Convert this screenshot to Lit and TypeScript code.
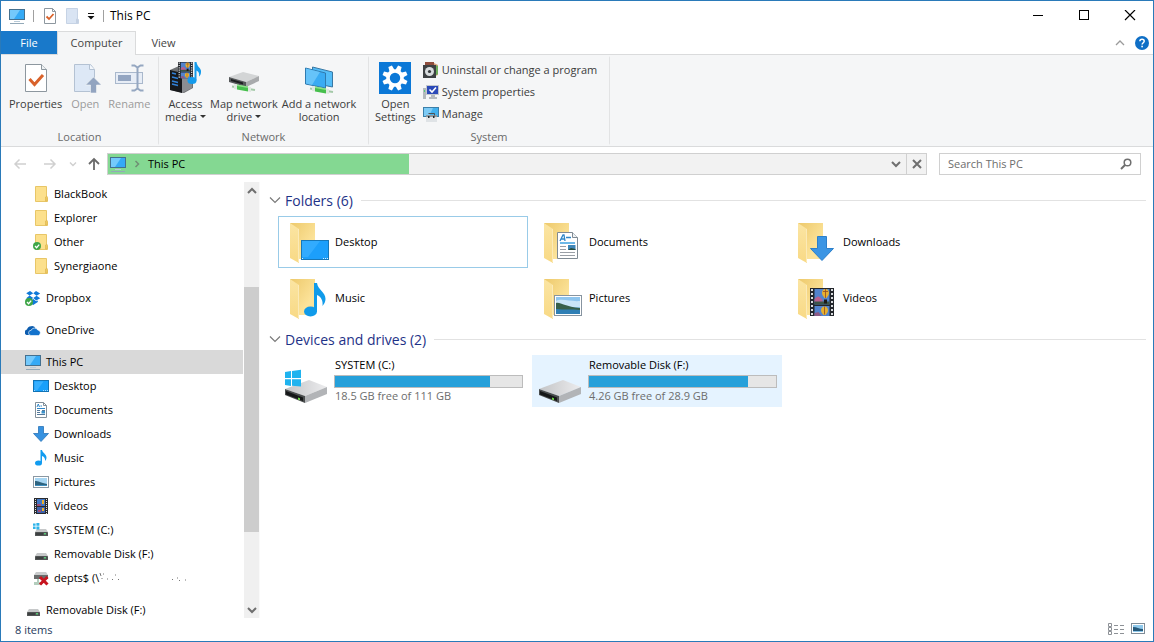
import { LitElement, html, css, svg, nothing } from "lit";
import type { TemplateResult } from "lit";
import { customElement, property, state } from "lit/decorators.js";
import { classMap } from "lit/directives/class-map.js";
import { styleMap } from "lit/directives/style-map.js";

/* ---------- Artwork ---------- */

interface Glyph {
  w: number;
  h: number;
  art: TemplateResult;
}

const monitor: Glyph = {
  w: 16,
  h: 16,
  art: svg`
    <rect x="0.5" y="1.5" width="15" height="10" fill="#35aaf6" stroke="#44708f"/>
    <path d="M1 2h10L5 11H1z" fill="#74c9fb"/>
    <path d="M5 13.5h6" stroke="#b9cbd8"/><path d="M1 15.5h14" stroke="#93a9b8"/>`,
};

const folderSmall: Glyph = {
  w: 16,
  h: 16,
  art: svg`
    <path d="M2.5 0.5h11v10l1 1v4h-12z" fill="#fce08c" stroke="#e8c667"/>
    <path d="M12.5 15V11l1.500-1v5z" fill="#f6d36b" stroke="#dcb450" stroke-width=".7"/>`,
};

const okBadge = svg`
  <circle cx="4" cy="12" r="4" fill="#3fa648"/>
  <path d="M2 12l1.6 1.7L6.2 10.6" fill="none" stroke="#fff" stroke-width="1.3"/>`;

const folderSynced: Glyph = { w: 16, h: 16, art: svg`${folderSmall.art}${okBadge}` };

const dropbox: Glyph = {
  w: 16,
  h: 16,
  art: svg`
    <path d="M5 1l3.3 2.2L4.6 5.6 1.2 3.3zM11 1l4.2 2.4-3.6 2.4-3.3-2.6zM1.2 8.2l3.4-2.6L8.3 8 5 10.2zM11.6 5.8l3.6 2.4-4 2.2L8.3 8zM8.2 9l3 2.3 1.6-.8v1.6L8.2 15 4 12.2l1-.9z" fill="#1079d8"/>
    ${okBadge}`,
};

const onedrive: Glyph = {
  w: 16,
  h: 16,
  art: svg`
    <path d="M1.6 13A2.8 2.8 0 0 1 2 7.6 4.2 4.2 0 0 1 6 4.2a4.4 4.4 0 0 1 4.4 1.4L6 8 4 13z" fill="#0c5cae"/>
    <path d="M6 13.5a2.6 2.6 0 0 1 .2-5.2 3.5 3.5 0 0 1 6.4-.4A2.9 2.9 0 0 1 13.5 13.5z" fill="#1272cc" stroke="#fff" stroke-width=".6"/>`,
};

const desktopSmall: Glyph = {
  w: 16,
  h: 16,
  art: svg`
    <rect x="0.5" y="2.5" width="15" height="11" fill="#18a0fb" stroke="#1173b5"/>
    <path d="M1.5 3.5h9L4 12.5H1.5z" fill="#38b0ff"/>
    <path d="M1 12.5h2M10 12.5h5" stroke="#cfe9fb" stroke-width=".8" stroke-dasharray="1 1"/>`,
};

const pageDoc = svg`
  <path d="M.5.5h15l5 5v21H.5z" fill="#fff" stroke="#7f8a93"/>
  <path d="M15.5.5v5h5" fill="#eef2f5" stroke="#7f8a93"/>
  <path d="M3 9l3-6h1l1 6M4.500 7H7.500M9 5.500h5" fill="none" stroke="#2f86c8" stroke-width="1.300"/>
  <path d="M3 11h15" stroke="#2f9be0" stroke-width="1.400"/>
  <path d="M3 14.500h6M3 17.500h6M3 20.500h15M3 23.500h15" stroke="#9a9fa6"/>
  <rect x="11" y="13" width="7.500" height="5" fill="#3f86b8"/><path d="M11 18l3-2 4.500 1v1z" fill="#274b3a"/>`;

const documentSmall: Glyph = {
  w: 16,
  h: 16,
  art: svg`
    <path d="M2.500.500h8l3 3v12h-11z" fill="#fff" stroke="#83909a"/>
    <path d="M10.500.500v3h3" fill="none" stroke="#83909a"/>
    <path d="M4 5l1.300-3L6.500 5M7.500 4H9M4 6.500h8" fill="none" stroke="#2f86c8"/>
    <path d="M4 8.500h3M4 10.500h3M4 12.500h8M9 8.500h3" stroke="#55799a"/>
    <rect x="8.500" y="9" width="3.500" height="2.500" fill="#3d92ca"/>`,
};

const downloadSmall: Glyph = {
  w: 16,
  h: 16,
  art: svg`<path d="M5.500.500h5v7h5L8 15.500.500 7.500h5z" fill="#3792e0" stroke="#2a73b8" stroke-width=".8"/>`,
};

const noteSmall: Glyph = {
  w: 16,
  h: 16,
  art: svg`
    <ellipse cx="5.500" cy="13" rx="3.500" ry="2.600" fill="#119cf0"/>
    <path d="M7.500 0h1.500c.5 3 4.500 4 4.500 7.500 0 1.500-.6 2.500-1.500 3.500 .3-2.500-.5-4-3-5v7H7.500z" fill="#119cf0"/>`,
};

const pictureSmall: Glyph = {
  w: 16,
  h: 16,
  art: svg`
    <rect x="0.500" y="2.500" width="15" height="11" fill="#fff" stroke="#8a98a3"/>
    <rect x="2" y="4" width="12" height="8" fill="#a7d6f3"/>
    <path d="M2 7c3 0 6 1.500 12 3v2H2z" fill="#2e6480"/><path d="M2 11h12v1H2z" fill="#3d8fc0"/>`,
};

const filmArt = svg`
  <rect width="24" height="28" fill="#23262b"/>
  <path d="M2 1v27M22 1v27" stroke="#d9dcdf" stroke-width="2" stroke-dasharray="2 2"/>
  <rect x="4.500" y="1" width="15" height="15.500" fill="#5283cd"/>
  <path d="M4.500 11c2-2 3-3 5-2l3 3v2h-8z" fill="#b8608f"/><path d="M4.500 13.500h15v3h-15z" fill="#3c5547"/>
  <path d="M15.500 1c2.500 0 3.500 2 3.500 4s-1.500 3.500-2.500 5h-2c-1-1.500-2.500-3-2.500-5s1-4 3.500-4z" fill="#e8b02e"/>
  <path d="M15.500 1v9M13 3.500h5" stroke="#8f4a24" stroke-width=".8"/><path d="M14 11.500h3v4h-3z" fill="#1d1a18"/>
  <rect x="4.500" y="18" width="15" height="10" fill="#5283cd"/>
  <path d="M14.500 18.500c2.500 0 3.500 2 3.500 4s-1.500 3-2.500 4.500h-2c-1-1.500-2.500-2.500-2.500-4.500s1-4 3.500-4z" fill="#e8b02e"/>
  <path d="M14.500 18.500v8" stroke="#8f4a24" stroke-width=".8"/><path d="M4.500 25l4-1 3 4h-7z" fill="#8c5a86"/>`;

const videoSmall: Glyph = {
  w: 16,
  h: 16,
  art: svg`
    <rect x="1" y="0" width="14" height="16" fill="#2a2b2e"/>
    <path d="M2.500 1v15M13.500 1v15" stroke="#dfe2e4" stroke-dasharray="1 1"/>
    <rect x="4" y="1" width="8" height="7" fill="#4176c4"/><rect x="4" y="9" width="8" height="6" fill="#3c62ad"/>
    <path d="M9 2h2v4H9zM9 10h2v3H9z" fill="#eab030"/><path d="M4 6h4v2H4zM5 12h3v2H5z" fill="#a04c72"/>`,
};

const driveSmallArt = svg`
  <path d="M4 7h9l2 3H2z" fill="#c6c8c9"/>
  <rect x="2" y="10" width="13" height="4" rx=".6" fill="#505454"/>
  <path d="M3 12h7" stroke="#2a2d2e"/><rect x="11" y="11" width="2" height="1.500" fill="#58c877"/>`;

const driveSmall: Glyph = { w: 16, h: 16, art: driveSmallArt };

const systemSmall: Glyph = {
  w: 16,
  h: 16,
  art: svg`
    ${driveSmallArt}
    <path d="M0 1.500h2.600v2.300H0zM3.400 1h3v2.800h-3zM0 4.600h2.600v2.300H0zM3.400 4.600h3v2.800h-3z" fill="#2fb4ea"/>`,
};

const netDriveBroken: Glyph = {
  w: 16,
  h: 16,
  art: svg`
    <path d="M3 2h10l2 3H1z" fill="#c9cbcc"/><rect x="1" y="5" width="14" height="4" fill="#686c6c"/>
    <path d="M4 9h2v3H4zM1 12h8v3H1z" fill="#b3cdbd"/>
    <path d="M7 7l7.500 7.500M14.500 7L7 14.500" stroke="#c8141e" stroke-width="3"/>`,
};

const bigFolder = svg`
  <defs>
    <linearGradient id="fb" x1="0" x2="1" y1="0" y2="1"><stop offset="0" stop-color="#edc96b"/><stop offset=".7" stop-color="#fce39a"/></linearGradient>
    <linearGradient id="ff" x1="0" x2="0" y1="0" y2="1"><stop offset="0" stop-color="#fbe5a3"/><stop offset="1" stop-color="#f8d985"/></linearGradient>
  </defs>
  <path d="M7 5h25v36H14z" fill="url(#fb)"/>
  <path d="M7 5l9 6v34l-9-5z" fill="url(#ff)"/><path d="M15.500 11v33" stroke="#fbeab8"/>`;

const folderWith = (overlay: TemplateResult): Glyph => ({
  w: 48,
  h: 48,
  art: svg`${bigFolder}${overlay}`,
});

const folderDesktop = folderWith(svg`
  <rect x="18.500" y="22.500" width="27" height="19" fill="#1c9ffb" stroke="#1777b8"/>
  <path d="M19 23h18L25 39h-6z" fill="#3cb0ff" opacity=".7"/>
  <path d="M19 40.500h2M40 40.500h5" stroke="#d7efff" stroke-dasharray="1 1"/>`);
const folderDocuments = folderWith(svg`<g transform="translate(20 14)">${pageDoc}</g>`);
const folderDownloads = folderWith(svg`
  <path d="M26.500 18.500h9v12h7L31 42.500 19.500 30.500h7z" fill="#3b95e4" stroke="#2c7fca"/>`);
const folderMusic = folderWith(svg`
  <ellipse cx="27.500" cy="37.500" rx="6.500" ry="5" fill="#109bea"/>
  <path d="M31 9h3c1 7 8.500 9 8.500 16 0 3-1.500 5-3 7 .6-5-1-9-5.500-11v17h-3z" fill="#109bea"/>`);
const folderPictures = folderWith(svg`
  <rect x="17.500" y="21.500" width="27" height="20" fill="#fff" stroke="#8794a0"/>
  <rect x="19" y="23" width="24" height="17" fill="#8ec5ee"/>
  <path d="M19 27c6-3 15 1 24 0v6H19z" fill="#c9e5f7"/>
  <path d="M19 29c5-1 9 4 24 5v3H19z" fill="#37604a"/><path d="M19 35c8 1 16 0 24 1v4H19z" fill="#2f7fb5"/>`);
const folderVideos = folderWith(svg`<g transform="translate(19 14)">${filmArt}</g>`);

const driveBody = svg`
  <defs><linearGradient id="dt" x1="0" x2="1"><stop offset="0" stop-color="#c3c4c6"/><stop offset="1" stop-color="#ececee"/></linearGradient></defs>
  <path d="M2 32L26 23l18 7-22 9z" fill="url(#dt)"/>
  <path d="M22 39l22-9v7l-22 9z" fill="#b2b4b7"/>
  <path d="M2 32l20 7v7L2 38z" fill="#4a4d4e"/>
  <path d="M3 34l17 6.500v3.500L3 37.500z" fill="#151718"/><path d="M15 40.500l2 .8v2l-2-.8z" fill="#6fdc46"/>`;
const driveBig: Glyph = { w: 48, h: 48, art: driveBody };
const systemDriveBig: Glyph = {
  w: 48,
  h: 48,
  art: svg`${driveBody}
    <path d="M2 15l6-.9v7H2zM9 14l9-1.200v8.300H9zM2 22.200h6v6.700l-6-.9zM9 22.200h9v7.300L9 28.800z" fill="#1fb3ef"/>`,
};

const propertiesBig: Glyph = {
  w: 32,
  h: 32,
  art: svg`
    <path d="M5.500 2.500h16l5 5v22h-21z" fill="#fff" stroke="#8d979f"/>
    <path d="M21.500 2.500v5h5" fill="#eef1f3" stroke="#8d979f"/>
    <path d="M9.500 17l5 5.500 8.500-9.500" fill="none" stroke="#d9622b" stroke-width="3"/>`,
};
const openBig: Glyph = {
  w: 32,
  h: 32,
  art: svg`
    <path d="M5.500 2.500h16l4 5v22h-20z" fill="#dde8f6" stroke="#b4c2d3"/>
    <path d="M20.500 2.500v5h5" fill="#f3f7fc" stroke="#b4c2d3"/>
    <path d="M24.500 15l8 8h-5v8h-6v-8h-5z" fill="#92a4c0" stroke="#f5f6f7" stroke-width=".6"/>`,
};
const renameBig: Glyph = {
  w: 32,
  h: 32,
  art: svg`
    <rect x="2.500" y="10.500" width="27" height="11" fill="#e7edf6" stroke="#a9b8cc"/>
    <rect x="5" y="13" width="13" height="6" fill="#93a5c1"/>
    <path d="M18.500 3.500h3l3 2 3-2h3M18.500 28.500h3l3-2 3 2h3M24.500 5v22" fill="none" stroke="#95a7c1" stroke-width="2"/>`,
};
const accessBig: Glyph = {
  w: 32,
  h: 32,
  art: svg`
    <path d="M1 8l9-4 14 4v18l-9 5L1 28z" fill="#6d7073"/>
    <path d="M1 8l12 3v20L1 28z" fill="#17191c"/>
    <path d="M13 11l10-4v19l-10 5z" fill="#8b8e92"/>
    <path d="M3 11l4 1M3 15l6 1.500M3 19l6 1.500M3 22l6 1.500" stroke="#3181d8" stroke-width="1.500"/>
    <g transform="translate(9 0) scale(.62 .58)">${filmArt}</g>
    <ellipse cx="23" cy="18.500" rx="4.500" ry="3.500" fill="#149bec"/>
    <path d="M25.500 0h2c.5 5 5 6 4.500 10 0 2-.8 3.500-2 4.500 .5-3.500-.5-5-2.500-6v10h-2z" fill="#149bec"/>`,
};
const cable = svg`
  <path d="M4 24.500l23 3.500" stroke="#a4c9a8" stroke-width="2"/>
  <path d="M9 22.500l11 2v5l-11-2z" fill="#46bf4d"/><path d="M9 22.500l11 2v1.500l-11-2z" fill="#8fe08c"/>
  <path d="M20 24.500l3 .5v5l-3-.5zM6 22l3 .5v5L6 27z" fill="#dfe8e0"/>`;
const mapDriveBig: Glyph = {
  w: 32,
  h: 32,
  art: svg`
    <path d="M1 15l14-5 16 4-13 6z" fill="#d3d5d6"/><path d="M1 15l17 5v5L1 20z" fill="#56595b"/>
    <path d="M3 17l12 3.500v2L3 19z" fill="#1d2021"/><path d="M18 20l13-6v5l-13 6z" fill="#a8aaac"/>
    ${cable}`,
};
const addLocationBig: Glyph = {
  w: 32,
  h: 32,
  art: svg`
    <path d="M9.500 5l20 5v15l-20-4z" fill="#54bdf8" stroke="#3a78a3"/>
    <path d="M2.500 6l20 5v15l-20-4z" fill="#3aabf3" stroke="#2f7bb0"/>
    <path d="M3 6.500L17 10 9 23 3 21.500z" fill="#79cdfb" opacity=".7"/>
    <g transform="translate(3 2)">${cable}</g>`,
};
const settingsBig: Glyph = {
  w: 32,
  h: 32,
  art: svg`
    <rect width="32" height="32" fill="#0b78d7"/>
    ${[22.5, 67.5, 112.5, 157.5, 202.5, 247.5, 292.5, 337.5].map(
      (a) => svg`<path d="M13.300 8.500l.8-5.200h3.800l.8 5.200z" fill="#fff" transform=${`rotate(${a} 16 16)`}/>`,
    )}
    <circle cx="16" cy="16" r="7" fill="none" stroke="#fff" stroke-width="3.600"/>`,
};

const uninstall: Glyph = {
  w: 16,
  h: 16,
  art: svg`
    <path d="M5 1h6l4 2v10l-3 1z" fill="#d9a07a"/><path d="M12 3l3 1v8l-3 2z" fill="#6cae5c"/>
    <path d="M2 0h9v4H2z" fill="#8e4d3c"/>
    <rect x="0" y="3" width="13" height="13" fill="#3d4143"/>
    <circle cx="6.500" cy="9.500" r="4.500" fill="#d8dcde"/><circle cx="6.500" cy="9.500" r="1.600" fill="#35393b"/>`,
};
const sysProps: Glyph = {
  w: 16,
  h: 16,
  art: svg`
    <path d="M0 4h3v11H0z" fill="#b3b9bd"/><path d="M1 6h1v2H1z" fill="#5c7"/>
    <rect x="3.500" y="1.500" width="12" height="9" fill="#2b49b8" stroke="#c3c8ce"/>
    <path d="M6.500 5.500l2.500 2.500L13 3.500" fill="none" stroke="#fff" stroke-width="1.600"/>
    <path d="M8 11h4v2H8zM6 13h8v2H6z" fill="#b5babf"/>`,
};
const manage: Glyph = {
  w: 16,
  h: 16,
  art: svg`
    <rect x=".5" y="1.500" width="15" height="9" fill="#43b1ee" stroke="#3b7fa9"/>
    <path d="M1 2h9L6 10H1z" fill="#7dcbf6"/>
    <path d="M3 9h11v7H3z" fill="#dfe3e6"/><path d="M3 9h11v2H3z" fill="#8f989e"/>
    <path d="M5 10h1.500v2H5zM10 10h1.500v2H10z" fill="#23282b"/><path d="M5.500 7.500h6v2" fill="none" stroke="#4b5257"/>`,
};

const checkPage: Glyph = {
  w: 16,
  h: 16,
  art: svg`
    <path d="M2.500.500h8l3 3v12h-11z" fill="#fff" stroke="#8d979f"/><path d="M10.500.500v3h3" fill="none" stroke="#8d979f"/>
    <path d="M4.500 8.500L7 11l4.500-5" fill="none" stroke="#d9622b" stroke-width="1.800"/>`,
};
const newPage: Glyph = {
  w: 13,
  h: 16,
  art: svg`<path d="M.500.500h11v10l1 1v4H.500z" fill="#d9e4f3" stroke="#c6d3e5"/><path d="M10 15v-4l2-1v5z" fill="#c3d0e2"/>`,
};
const customize: Glyph = {
  w: 8,
  h: 8,
  art: svg`<path d="M1 1.500h6" stroke="#111"/><path d="M.5 4h7L4 7.500z" fill="#111"/>`,
};
const minimize: Glyph = { w: 12, h: 12, art: svg`<path d="M1 5.500h10" stroke="#000"/>` };
const maximize: Glyph = { w: 12, h: 12, art: svg`<rect x="1.500" y=".5" width="9" height="9" fill="none" stroke="#000"/>` };
const close: Glyph = { w: 12, h: 12, art: svg`<path d="M1 0l10 10M11 0L1 10" stroke="#000" stroke-width="1.200"/>` };
const collapse: Glyph = { w: 10, h: 6, art: svg`<path d="M1 5l4-4 4 4" fill="none" stroke="#9b9b9b" stroke-width="1.300"/>` };
const helpDisc: Glyph = {
  w: 14,
  h: 14,
  art: svg`<circle cx="7" cy="7" r="7" fill="#0f6fc6"/>
    <path d="M4.900 5.300c0-2.700 4.300-2.600 4.300-.1 0 1.500-2.100 1.600-2.100 3.300" fill="none" stroke="#fff" stroke-width="1.500"/><rect x="6.300" y="9.700" width="1.600" height="1.600" fill="#fff"/>`,
};
const back: Glyph = { w: 14, h: 12, art: svg`<path d="M13 6H2M6.500 1.500L2 6l4.500 4.500" fill="none" stroke="#d0d0d0" stroke-width="1.500"/>` };
const forward: Glyph = { w: 14, h: 12, art: svg`<path d="M1 6h11M7.500 1.500L12 6l-4.500 4.500" fill="none" stroke="#d0d0d0" stroke-width="1.500"/>` };
const recent: Glyph = { w: 8, h: 6, art: svg`<path d="M1 1.500l3 3 3-3" fill="none" stroke="#cfcfcf" stroke-width="1.400"/>` };
const up: Glyph = { w: 14, h: 14, art: svg`<path d="M7 13V2M2 7l5-5 5 5" fill="none" stroke="#6a6a6a" stroke-width="1.800"/>` };
const crumb: Glyph = { w: 6, h: 8, art: svg`<path d="M1.500 1l3 3-3 3" fill="none" stroke="#6f8f74" stroke-width="1.500"/>` };
const chevronDown: Glyph = { w: 10, h: 8, art: svg`<path d="M1 2l4 4 4-4" fill="none" stroke="#6f6f6f" stroke-width="2"/>` };
const chevronUp: Glyph = { w: 10, h: 8, art: svg`<path d="M1 6l4-4 4 4" fill="none" stroke="#6f6f6f" stroke-width="2"/>` };
const stop: Glyph = { w: 10, h: 10, art: svg`<path d="M1 1l8 8M9 1L1 9" stroke="#6f6f6f" stroke-width="2"/>` };
const lens: Glyph = {
  w: 12,
  h: 12,
  art: svg`<circle cx="7.500" cy="4.500" r="3.300" fill="none" stroke="#6f6f6f" stroke-width="1.500"/><path d="M5 7L1 11" stroke="#6f6f6f" stroke-width="2"/>`,
};
const sectionChevron: Glyph = { w: 12, h: 8, art: svg`<path d="M1 1.500l5 5 5-5" fill="none" stroke="#7a7a7a" stroke-width="1.200"/>` };
const detailsView: Glyph = {
  w: 16,
  h: 12,
  art: svg`<path d="M.5.500h3v3h-3zM.5 4.500h3v3h-3zM.5 8.500h3v3h-3z" fill="#fff" stroke="#8d9196"/>
    <path d="M6 2.500h4M12 2.500h4M6 6.500h4M12 6.500h4M6 10.500h4M12 10.500h4" stroke="#8d9196"/>`,
};
const tilesView: Glyph = {
  w: 14,
  h: 12,
  art: svg`<rect x=".5" y=".5" width="13" height="10" fill="#fff" stroke="#7f8c97"/><rect x="2" y="2" width="10" height="7" fill="#8fc9ec"/><path d="M2 4c4 0 6 2 10 2v2H2z" fill="#26597a"/>`,
};
const erased: Glyph = {
  w: 88,
  h: 12,
  art: svg`<path d="M1 2l1 3M3 7v1M4 3h1M8 8h1M13 8.500h1M16 4h1M19 8.500h1M73 8.500h1M78 7h1M80 9.500h1M86 9h1" stroke="#777"/>`,
};

const draw = (g: Glyph) => html`<svg
  width=${g.w}
  height=${g.h}
  viewBox=${`0 0 ${g.w} ${g.h}`}
  aria-hidden="true"
>${g.art}</svg>`;

const base = css`
  * { box-sizing: border-box; }
  svg { display: block; flex: none; }
  button {
    font: inherit;
    color: inherit;
    background: none;
    border: 0;
    padding: 0;
    margin: 0;
  }
  a { color: inherit; text-decoration: none; }
`;

/* ---------- Ribbon ---------- */

interface Command {
  lines: string[];
  icon: Glyph;
  off?: boolean;
  menu?: boolean;
}

@customElement("explorer-ribbon")
export class ExplorerRibbon extends LitElement {
  static styles = [
    base,
    css`
      :host { display: flex; height: 92px; background: #f5f6f7; border-bottom: 1px solid #dadbdc; color: #3c3c3c; }
      .group { display: flex; flex-direction: column; align-items: center; padding-top: 7px; border-right: 1px solid #e2e3e4; border-image: linear-gradient(#f5f6f7 2%, #e2e3e4 4%, #e2e3e4 96%, #f5f6f7 98%) 1; }
      .location { flex: 0 0 158px; }
      .network { flex: 0 0 210px; }
      .system { flex: 0 0 241px; }
      .row { display: flex; flex: 1; align-items: flex-start; align-self: flex-start; padding-left: 6px; gap: 4px; }
      .location .row { padding-left: 8px; gap: 7px; }
      .system .row { gap: 7px; }
      .big { display: flex; flex-direction: column; align-items: center; line-height: 13px; white-space: nowrap; }
      .big svg { margin-bottom: 3px; }
      .big:disabled { color: #9b9b9b; }
      .line { display: flex; align-items: center; gap: 3px; }
      .arrow { border: 3px solid transparent; border-top-color: #333; border-bottom-width: 0; }
      .list { display: flex; flex-direction: column; gap: 6px; }
      .small { display: flex; align-items: center; gap: 3px; height: 16px; white-space: nowrap; }
      .small span { padding-bottom: 2px; }
      .caption { line-height: 16px; color: #6a6a6a; padding-bottom: 1px; }
    `,
  ];

  private big = (c: Command) => html`<button class="big" type="button" ?disabled=${c.off}>
    ${draw(c.icon)}
    ${c.lines.map(
      (l, i) => html`<span class="line">${l}${c.menu && i === c.lines.length - 1 ? html`<i class="arrow"></i>` : nothing}</span>`,
    )}
  </button>`;

  private small = (icon: Glyph, label: string) => html`<button class="small" type="button">${draw(icon)}<span>${label}</span></button>`;

  render() {
    return html`
      <section class="group location">
        <div class="row">
          ${[
            { lines: ["Properties"], icon: propertiesBig },
            { lines: ["Open"], icon: openBig, off: true },
            { lines: ["Rename"], icon: renameBig, off: true },
          ].map(this.big)}
        </div>
        <div class="caption">Location</div>
      </section>
      <section class="group network">
        <div class="row">
          ${[
            { lines: ["Access", "media"], icon: accessBig, menu: true },
            { lines: ["Map network", "drive"], icon: mapDriveBig, menu: true },
            { lines: ["Add a network", "location"], icon: addLocationBig },
          ].map(this.big)}
        </div>
        <div class="caption">Network</div>
      </section>
      <section class="group system">
        <div class="row">
          ${this.big({ lines: ["Open", "Settings"], icon: settingsBig })}
          <div class="list">
            ${this.small(uninstall, "Uninstall or change a program")}
            ${this.small(sysProps, "System properties")} ${this.small(manage, "Manage")}
          </div>
        </div>
        <div class="caption">System</div>
      </section>
    `;
  }
}

/* ---------- Navigation tree ---------- */

interface Node {
  label: string;
  icon: Glyph;
  child?: boolean;
  current?: boolean;
  tail?: Glyph;
}

const tree: Node[][] = [
  [
    { label: "BlackBook", icon: folderSmall, child: true },
    { label: "Explorer", icon: folderSmall, child: true },
    { label: "Other", icon: folderSynced, child: true },
    { label: "Synergiaone", icon: folderSmall, child: true },
  ],
  [{ label: "Dropbox", icon: dropbox }],
  [{ label: "OneDrive", icon: onedrive }],
  [
    { label: "This PC", icon: monitor, current: true },
    { label: "Desktop", icon: desktopSmall, child: true },
    { label: "Documents", icon: documentSmall, child: true },
    { label: "Downloads", icon: downloadSmall, child: true },
    { label: "Music", icon: noteSmall, child: true },
    { label: "Pictures", icon: pictureSmall, child: true },
    { label: "Videos", icon: videoSmall, child: true },
    { label: "SYSTEM (C:)", icon: systemSmall, child: true },
    { label: "Removable Disk (F:)", icon: driveSmall, child: true },
    { label: "depts$ (\\", icon: netDriveBroken, child: true, tail: erased },
  ],
  [{ label: "Removable Disk (F:)", icon: driveSmall }],
];

@customElement("explorer-tree")
export class ExplorerTree extends LitElement {
  static styles = [
    base,
    css`
      :host { display: flex; flex: 0 0 259px; min-height: 0; }
      .nodes { flex: 1; display: flex; flex-direction: column; gap: 8px; overflow: hidden; min-height: 0; }
      ul { list-style: none; margin: 0; padding: 0; }
      .node { display: flex; align-items: center; gap: 5px; height: 24px; padding-left: 24px; white-space: nowrap; color: #000; }
      .node span { padding-bottom: 2px; }
      .child { padding-left: 32px; }
      .current { background: #d9d9d9; }
      .tail { margin-left: -5px; }
      .bar { flex: 0 0 16px; margin-left: 1px; display: flex; flex-direction: column; background: #f0f0f0; border-right: 1px solid #fafafa; }
      .bar button { height: 17px; display: flex; align-items: center; justify-content: center; }
      .before { flex: 88; }
      .thumb { flex: 245; background: #cdcdcd; }
      .after { flex: 69; }
    `,
  ];

  render() {
    return html`
      <nav class="nodes" aria-label="Navigation pane">
        ${tree.map(
          (group) => html`<ul>
            ${group.map(
              (n) => html`<li>
                <a href="#" class=${classMap({ node: true, child: !!n.child, current: !!n.current })}
                  >${draw(n.icon)}<span>${n.label}</span>${n.tail ? html`<span class="tail">${draw(n.tail)}</span>` : nothing}</a
                >
              </li>`,
            )}
          </ul>`,
        )}
      </nav>
      <div class="bar">
        <button type="button" aria-label="Scroll up">${draw(chevronUp)}</button>
        <div class="before"></div>
        <div class="thumb"></div>
        <div class="after"></div>
        <button type="button" aria-label="Scroll down">${draw(chevronDown)}</button>
      </div>
    `;
  }
}

/* ---------- Content ---------- */

interface Tile {
  label: string;
  icon: Glyph;
  used?: number;
  free?: string;
}

const folders: Tile[] = [
  { label: "Desktop", icon: folderDesktop },
  { label: "Documents", icon: folderDocuments },
  { label: "Downloads", icon: folderDownloads },
  { label: "Music", icon: folderMusic },
  { label: "Pictures", icon: folderPictures },
  { label: "Videos", icon: folderVideos },
];
const drives: Tile[] = [
  { label: "SYSTEM (C:)", icon: systemDriveBig, used: 83, free: "18.5 GB free of 111 GB" },
  { label: "Removable Disk (F:)", icon: driveBig, used: 85, free: "4.26 GB free of 28.9 GB" },
];

@customElement("explorer-content")
export class ExplorerContent extends LitElement {
  @state() private focused = "Desktop";
  @state() private hot = "Removable Disk (F:)";

  static styles = [
    base,
    css`
      :host { display: block; flex: 1; min-width: 0; padding: 8px 7px 0 9px; overflow: hidden; }
      h2 { display: flex; align-items: center; gap: 4px; margin: 0; height: 22px; padding-bottom: 2px; font-size: 14px; font-weight: 400; color: #1e3287; white-space: nowrap; }
      h2::after { content: ""; flex: 1; height: 1px; margin-left: 4px; background: #e2e2e2; }
      .tiles { display: grid; grid-template-columns: repeat(auto-fill, 250px); gap: 4px; padding: 4px 0 5px 9px; }
      .tile { display: flex; align-items: center; gap: 4px; height: 52px; padding: 1px 4px; border: 1px solid transparent; text-align: left; color: #000; }
      .focused { border-color: #99cbe8; }
      .hot { background: #e5f3ff; }
      .text { flex: 1; display: flex; flex-direction: column; }
      .drive { padding-bottom: 2px; }
      .line { line-height: 16px; }
      .meta { color: #6d6d6d; }
      progress { appearance: none; display: block; width: 189px; height: 13px; border: 1px solid #bcbcbc; margin: 2px 0 0 -1px; }
      progress::-webkit-progress-bar { background: #e6e6e6; }
      progress::-webkit-progress-value { background: #26a0da; }
    `,
  ];

  private tile = (t: Tile) => html`<button
    type="button"
    class=${classMap({ tile: true, focused: t.label === this.focused, hot: t.label === this.hot })}
    @click=${() => (this.focused = t.label)}
  >
    ${draw(t.icon)}
    <span class=${classMap({ text: true, drive: !!t.free })}>
      <span class="line">${t.label}</span>
      ${t.free
        ? html`<progress max="100" value=${t.used ?? 0} aria-label="Space used"></progress><span class="line meta">${t.free}</span>`
        : nothing}
    </span>
  </button>`;

  render() {
    return html`
      <h2>${draw(sectionChevron)}Folders (6)</h2>
      <div class="tiles">${folders.map(this.tile)}</div>
      <h2>${draw(sectionChevron)}Devices and drives (2)</h2>
      <div class="tiles">${drives.map(this.tile)}</div>
    `;
  }
}

/* ---------- Window ---------- */

@customElement("app-root")
export class AppRoot extends LitElement {
  @property({ type: Number }) loading = 36.8;

  static styles = [
    base,
    css`
      :host {
        display: flex;
        flex-direction: column;
        box-sizing: border-box;
        height: 100vh;
        border: 1px solid #2a7ab9;
        background: #fff;
        font: 11px "Open Sans", "Noto Sans", sans-serif;
        color: #000;
        overflow: hidden;
      }
      header { display: flex; align-items: center; height: 30px; padding-left: 8px; }
      .sep { width: 1px; height: 12px; background: #a0a0a0; }
      .quick { display: flex; align-items: center; gap: 8px; }
      .title { font-size: 12px; margin-left: 6px; padding-bottom: 2px; flex: 1; }
      .win { width: 46px; height: 30px; display: flex; align-items: center; justify-content: center; }
      .tabs { display: flex; height: 24px; border-bottom: 1px solid #dadbdc; color: #444; }
      .tab { display: flex; align-items: center; justify-content: center; height: 23px; }
      .file { width: 56px; background: #1979ca; color: #fff; }
      .active { width: 79px; height: 24px; padding-bottom: 2px; background: #f5f6f7; border: 1px solid #dadbdc; border-bottom: 0; }
      .view { width: 55px; }
      .aux { margin-left: auto; display: flex; align-items: center; gap: 10px; padding-right: 4px; }
      .address { display: flex; align-items: center; height: 35px; padding: 0 12px 1px; }
      .nav { display: flex; align-items: center; gap: 12px; }
      .history { display: flex; align-items: center; gap: 16px; }
      .pair { display: flex; align-items: center; gap: 10px; }
      .path { position: relative; flex: 1; display: flex; align-items: center; height: 22px; margin-left: 6px; border: 1px solid #d0d0d0; background: #f2f2f2; }
      .fill { position: absolute; inset: 0 auto 0 0; background: #84d892; }
      .crumbs { position: relative; display: flex; align-items: center; flex: 1; gap: 8px; padding-left: 2px; }
      .crumbs a { padding-bottom: 2px; }
      .end { display: flex; align-items: center; justify-content: center; width: 20px; height: 20px; }
      .stop { border-left: 1px solid #d0d0d0; }
      .search { display: flex; align-items: center; width: 202px; height: 22px; margin-left: 12px; padding: 0 8px; border: 1px solid #d0d0d0; }
      .search input { flex: 1; min-width: 0; border: 0; padding: 0 0 2px; font: inherit; outline: 0; background: none; }
      .search input::placeholder { color: #6d6d6d; opacity: 1; }
      main { flex: 1; display: flex; min-height: 0; }
      footer { display: flex; align-items: center; height: 23px; padding: 0 8px 0 14px; color: #1e395b; }
      .status { flex: 1; }
      .views { display: flex; gap: 7px; padding-bottom: 2px; }
    `,
  ];

  render() {
    return html`
      <header>
        <div class="quick">
          ${draw(monitor)}<i class="sep"></i>
          <button type="button" aria-label="Properties">${draw(checkPage)}</button>
          <button type="button" aria-label="New folder">${draw(newPage)}</button>
          <button type="button" aria-label="Customize Quick Access Toolbar">${draw(customize)}</button>
          <i class="sep"></i>
        </div>
        <span class="title">This PC</span>
        <button class="win" type="button" aria-label="Minimize">${draw(minimize)}</button>
        <button class="win" type="button" aria-label="Maximize">${draw(maximize)}</button>
        <button class="win" type="button" aria-label="Close">${draw(close)}</button>
      </header>
      <div class="tabs">
        <button class="tab file" type="button">File</button>
        <button class="tab active" type="button">Computer</button>
        <button class="tab view" type="button">View</button>
        <div class="aux">
          <button type="button" aria-label="Minimize the Ribbon">${draw(collapse)}</button>
          <button type="button" aria-label="Help">${draw(helpDisc)}</button>
        </div>
      </div>
      <explorer-ribbon></explorer-ribbon>
      <div class="address">
        <div class="nav">
          <div class="history">
            <button type="button" aria-label="Back">${draw(back)}</button>
            <button type="button" aria-label="Forward">${draw(forward)}</button>
          </div>
          <div class="pair">
            <button type="button" aria-label="Recent locations">${draw(recent)}</button>
            <button type="button" aria-label="Up">${draw(up)}</button>
          </div>
        </div>
        <div class="path">
          <div class="fill" style=${styleMap({ width: `${this.loading}%` })}></div>
          <div class="crumbs">${draw(monitor)}${draw(crumb)}<a href="#">This PC</a></div>
          <button class="end" type="button" aria-label="Previous locations">${draw(chevronDown)}</button>
          <button class="end stop" type="button" aria-label="Stop loading">${draw(stop)}</button>
        </div>
        <label class="search">
          <input type="text" placeholder="Search This PC" aria-label="Search This PC" />
          ${draw(lens)}
        </label>
      </div>
      <main>
        <explorer-tree></explorer-tree>
        <explorer-content></explorer-content>
      </main>
      <footer>
        <span class="status">8 items</span>
        <div class="views">
          <button type="button" aria-label="Details view">${draw(detailsView)}</button>
          <button type="button" aria-label="Large icons view">${draw(tilesView)}</button>
        </div>
      </footer>
    `;
  }
}
